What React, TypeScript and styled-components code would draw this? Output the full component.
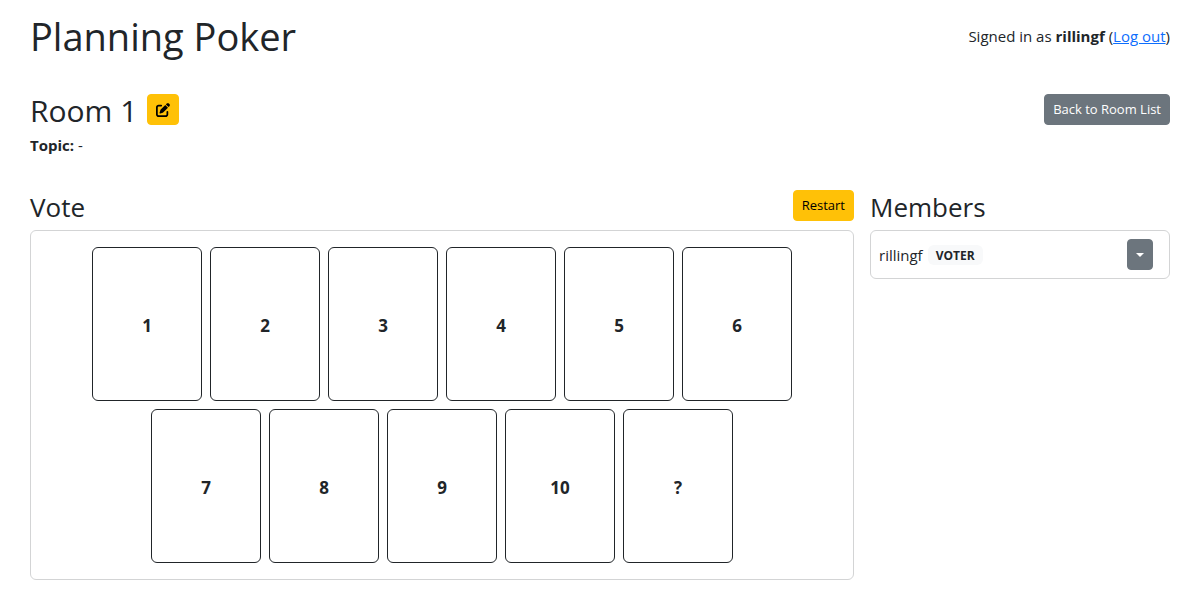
import React from "react";
import styled, { createGlobalStyle } from "styled-components";
import { FaPenToSquare } from "react-icons/fa6";

const GlobalStyle = createGlobalStyle`
  *, *::before, *::after { box-sizing: border-box; }
  body {
    margin: 0;
    background: #fff;
    color: #212529;
    font-family: "Segoe UI", "Open Sans", "Noto Sans", sans-serif;
    font-size: 15px;
    line-height: 24px;
  }
`;

const Page = styled.div`
  padding: 12px 14px 16px 30px;
`;

const Bar = styled.div`
  display: flex;
  align-items: flex-start;
  justify-content: space-between;
`;

const Header = styled(Bar).attrs({ as: "header" })`
  margin-bottom: 34px;
`;

const Title = styled.h1`
  margin: 0;
  font-size: 38px;
  line-height: 48px;
  font-weight: 400;
`;

const Account = styled.div`
  padding-top: 12px;
`;

const Link = styled.a`
  color: #0d6efd;
  text-decoration: underline;
`;

const RoomBar = styled(Bar)`
  min-height: 39px;
`;

const RoomTitle = styled.div`
  display: flex;
  align-items: flex-start;
  gap: 10px;
`;

const RoomName = styled.h2`
  margin: 0;
  font-size: 30px;
  line-height: 34px;
  font-weight: 400;
`;

const Topic = styled.div`
  margin-bottom: 33px;
`;

const Button = styled.button<{ $tone: "warning" | "secondary" }>`
  display: inline-flex;
  align-items: center;
  justify-content: center;
  height: 31px;
  padding: 0 8px;
  border: 1px solid;
  border-radius: 4px;
  font-family: inherit;
  font-size: 13px;
  line-height: 21px;
  cursor: pointer;
  color: ${(p) => (p.$tone === "warning" ? "#000" : "#fff")};
  background: ${(p) => (p.$tone === "warning" ? "#ffc107" : "#6c757d")};
  border-color: ${(p) => (p.$tone === "warning" ? "#ffc107" : "#6c757d")};
`;

const Columns = styled.main`
  display: grid;
  grid-template-columns: minmax(0, 1fr) 300px;
  gap: 16px;
  align-items: start;
`;

const SectionHead = styled(Bar)`
  height: 34px;
  margin-bottom: 6px;
`;

const SectionTitle = styled.h3`
  margin: 0;
  font-size: 26px;
  line-height: 34px;
  font-weight: 400;
`;

const Deck = styled.div`
  display: flex;
  flex-wrap: wrap;
  justify-content: center;
  gap: 8px;
  padding: 16px;
  border: 1px solid #d3d4d5;
  border-radius: 6px;
`;

const Card = styled.button`
  width: 110px;
  height: 154px;
  padding: 4px 0 0;
  border: 1px solid #212529;
  border-radius: 6px;
  background: #fff;
  color: inherit;
  font-family: inherit;
  font-size: 17px;
  line-height: 24px;
  font-weight: 700;
  cursor: pointer;
`;

const MemberList = styled.ul`
  margin: 0;
  padding: 0;
  list-style: none;
  border: 1px solid #d3d4d5;
  border-radius: 6px;
`;

const Member = styled.li`
  display: flex;
  align-items: center;
  justify-content: space-between;
  padding: 8px 16px 8px 8px;
`;

const MemberName = styled.div`
  display: flex;
  align-items: center;
  gap: 5px;
`;

const Badge = styled.span`
  padding: 5px 8px 3px;
  border-radius: 6px;
  background: #f8f9fa;
  font-size: 12px;
  line-height: 12px;
  font-weight: 700;
`;

const Caret = styled.span`
  border: 4px solid transparent;
  border-top-color: currentColor;
  border-bottom: 0;
`;

const cards = ["1", "2", "3", "4", "5", "6", "7", "8", "9", "10", "?"];
const members = [{ name: "rillingf", role: "VOTER" }];

export default function App() {
  return (
    <>
      <GlobalStyle />
      <Page>
        <Header>
          <Title>Planning Poker</Title>
          <Account>
            Signed in as <strong>rillingf</strong> (<Link href="#logout">Log out</Link>)
          </Account>
        </Header>
        <RoomBar>
          <RoomTitle>
            <RoomName>Room 1</RoomName>
            <Button $tone="warning" aria-label="Edit room">
              <FaPenToSquare size={14} />
            </Button>
          </RoomTitle>
          <Button $tone="secondary">Back to Room List</Button>
        </RoomBar>
        <Topic>
          <strong>Topic:</strong> -
        </Topic>
        <Columns>
          <section>
            <SectionHead>
              <SectionTitle>Vote</SectionTitle>
              <Button $tone="warning">Restart</Button>
            </SectionHead>
            <Deck>
              {cards.map((card) => (
                <Card key={card}>{card}</Card>
              ))}
            </Deck>
          </section>
          <section>
            <SectionHead>
              <SectionTitle>Members</SectionTitle>
            </SectionHead>
            <MemberList>
              {members.map((member) => (
                <Member key={member.name}>
                  <MemberName>
                    {member.name}
                    <Badge>{member.role}</Badge>
                  </MemberName>
                  <Button $tone="secondary" aria-label="Member actions">
                    <Caret />
                  </Button>
                </Member>
              ))}
            </MemberList>
          </section>
        </Columns>
      </Page>
    </>
  );
}
